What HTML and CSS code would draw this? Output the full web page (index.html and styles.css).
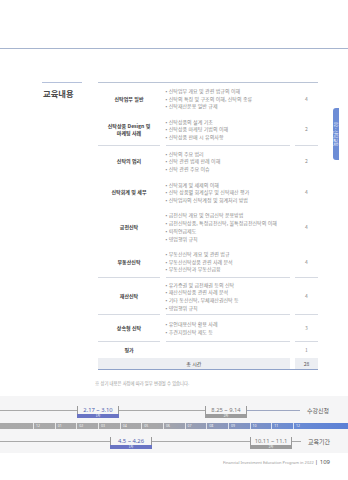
FILE: index.html
```html
<!DOCTYPE html>
<html lang="ko">
<head>
<meta charset="utf-8">
<title>교육내용</title>
<link rel="stylesheet" href="styles.css">
</head>
<body>
<div class="page">
  <div class="topline"></div>

  <div class="main">
    <div class="side-title"><h2>교육내용</h2></div>

    <div class="content">
      <div class="table">
        <div class="row">
          <div class="c-label">신탁업무 일반</div>
          <ul class="c-items">
            <li>신탁업무 개요 및 관련 법규의 이해</li>
            <li>신탁의 특징 및 구조의 이해, 신탁의 종류</li>
            <li>신탁재산운용 일반 규제</li>
          </ul>
          <div class="c-hour">4</div>
        </div>
        <div class="row sep">
          <div class="c-label">신탁상품 Design 및<br>마케팅 사례</div>
          <ul class="c-items">
            <li>신탁상품의 설계 기초</li>
            <li>신탁상품 마케팅 기법의 이해</li>
            <li>신탁상품 판매 시 유의사항</li>
          </ul>
          <div class="c-hour">2</div>
        </div>
        <div class="row">
          <div class="c-label">신탁의 법리</div>
          <ul class="c-items">
            <li>신탁의 주요 법리</li>
            <li>신탁 관련 법제 판례 이해</li>
            <li>신탁 관련 주요 이슈</li>
          </ul>
          <div class="c-hour">2</div>
        </div>
        <div class="row">
          <div class="c-label">신탁회계 및 세무</div>
          <ul class="c-items">
            <li>신탁회계 및 세제의 이해</li>
            <li>신탁 상품별 회계실무 및 신탁재산 평가</li>
            <li>신탁업자의 신탁계정 및 회계처리 방법</li>
          </ul>
          <div class="c-hour">4</div>
        </div>
        <div class="row">
          <div class="c-label">금전신탁</div>
          <ul class="c-items">
            <li>금전신탁 개요 및 연금신탁 운용방법</li>
            <li>금전신탁상품, 특정금전신탁, 불특정금전신탁의 이해</li>
            <li>퇴직연금제도</li>
            <li>영업행위 규칙</li>
          </ul>
          <div class="c-hour">4</div>
        </div>
        <div class="row sep">
          <div class="c-label">부동산신탁</div>
          <ul class="c-items">
            <li>부동산신탁 개요 및 관련 법규</li>
            <li>부동산신탁상품 관련 사례 분석</li>
            <li>부동산신탁과 부동산금융</li>
          </ul>
          <div class="c-hour">4</div>
        </div>
        <div class="row sep tight">
          <div class="c-label">재산신탁</div>
          <ul class="c-items">
            <li>유가증권 및 금전채권 등의 신탁</li>
            <li>재산신탁상품 관련 사례 분석</li>
            <li>기타 동산신탁, 무체재산권신탁 등</li>
            <li>영업행위 규칙</li>
          </ul>
          <div class="c-hour">4</div>
        </div>
        <div class="row sep loose">
          <div class="c-label">상속형 신탁</div>
          <ul class="c-items">
            <li>유언대용신탁 활용 사례</li>
            <li>후견지원신탁 제도 등</li>
          </ul>
          <div class="c-hour">3</div>
        </div>
        <div class="row">
          <div class="c-label">평가</div>
          <div class="c-items single"></div>
          <div class="c-hour">1</div>
        </div>
        <div class="row total">
          <div class="t-label">총 시간</div>
          <div class="t-hour">28</div>
        </div>
      </div>
      <p class="note">※ 상기 내용은 사정에 따라 일부 변경될 수 있습니다.</p>
    </div>

    <div class="tab-col"><div class="tab">02 · 신탁교육</div></div>
  </div>

  <div class="timeline">
    <div class="track">
      <div class="seg w77"></div>
      <div class="pbox first">
        <div class="pbox-top">2.17 ~ 3.10</div>
        <div class="pbox-bar">1차</div>
      </div>
      <div class="seg w86"></div>
      <div class="pbox second">
        <div class="pbox-top">8.25 ~ 9.14</div>
        <div class="pbox-bar">2차</div>
      </div>
      <div class="seg w53 bluish"></div>
      <div class="track-label">수강신청</div>
    </div>

    <div class="months">
      <div class="mlead"></div>
      <div class="m">12</div>
      <div class="m">01</div>
      <div class="m">02</div>
      <div class="m">03</div>
      <div class="m">04</div>
      <div class="m">05</div>
      <div class="m">06</div>
      <div class="m">07</div>
      <div class="m">08</div>
      <div class="m">09</div>
      <div class="m">10</div>
      <div class="m">11</div>
      <div class="m last">12</div>
    </div>

    <div class="track lower">
      <div class="seg w110"></div>
      <div class="pbox first">
        <div class="pbox-top">4.5 ~ 4.26</div>
        <div class="pbox-bar">1차</div>
      </div>
      <div class="seg w98"></div>
      <div class="pbox second">
        <div class="pbox-top">10.11 ~ 11.1</div>
        <div class="pbox-bar">2차</div>
      </div>
      <div class="seg w9"></div>
      <div class="track-label">교육기간</div>
    </div>
  </div>

  <div class="footer">Financial Investment Education Program in 2022 <span class="pageno">| 109</span></div>
</div>
</body>
</html>
```

FILE: styles.css
```css
* { box-sizing: border-box; }

html, body {
  margin: 0;
  padding: 0;
  background: #ffffff;
}

body {
  font-family: "Noto Sans CJK KR", "Noto Sans", sans-serif;
  color: #444;
}

.page {
  width: 348px;
  height: 480px;
  overflow: hidden;
  padding-top: 48px;
}

.topline {
  height: 1px;
  background: #a7b5cf;
}

/* ---------- main block ---------- */
.main {
  display: flex;
  margin-top: 33px;
  padding-left: 42px;
}

.side-title {
  width: 40px;
  border-top: 1.5px solid #b5c1db;
  align-self: flex-start;
}

.side-title h2 {
  margin: 0;
  padding: 5px 0 0 1px;
  font-size: 8.3px;
  line-height: 10px;
  font-weight: 700;
  color: #4a4a4a;
}

.content {
  width: 220px;
  margin-left: 16px;
}

.table {
  border-top: 1px solid #bac4d6;
  border-bottom: 1.2px solid #8fa2c9;
}

.row {
  display: grid;
  grid-template-columns: 62px 124px 23px;
  column-gap: 5.5px;
}

.c-label {
  display: flex;
  align-items: center;
  justify-content: center;
  text-align: center;
  font-size: 5px;
  line-height: 7.7px;
  font-weight: 700;
  color: #3c3c3c;
}

.c-items {
  margin: 0;
  padding: 3.9px 0;
  list-style: none;
  font-size: 5px;
  line-height: 7.7px;
  color: #8a8a8a;
  white-space: nowrap;
}

.c-items.single { min-height: 15.5px; }

.c-items li::before {
  content: "•";
  margin-right: 1.5px;
}

.c-hour {
  display: flex;
  align-items: center;
  justify-content: center;
  font-size: 5px;
  line-height: 7.7px;
  color: #8a8a8a;
}

.row.sep > * {
  border-bottom: 1px solid #d6dae2;
}

.row.tight .c-items { padding: 2.7px 0; }
.row.loose .c-items { padding: 5.2px 0; }

.row.total {
  height: 11px;
}

.t-label {
  grid-column: 1 / 3;
  background: #eceef2;
  display: flex;
  align-items: center;
  justify-content: center;
  font-size: 5px;
  color: #444;
}

.t-hour {
  background: #eceef2;
  display: flex;
  align-items: center;
  justify-content: center;
  font-size: 5px;
  color: #555;
}

.note {
  margin: 10px 0 0 -3px;
  font-size: 4.3px;
  line-height: 7px;
  color: #9a9a9a;
}

/* ---------- right tab ---------- */
.tab-col {
  width: 15px;
  margin-left: 15px;
}

.tab {
  margin-top: 26px;
  height: 52px;
  background: #6d8dd6;
  border-radius: 3px 0 0 3px;
  color: #ffffff;
  font-size: 4.3px;
  writing-mode: vertical-rl;
  text-orientation: sideways;
  display: flex;
  align-items: center;
  justify-content: center;
}

/* ---------- timeline ---------- */
.timeline {
  margin-top: 9.5px;
  background: #f5f5f6;
  padding: 10px 0 4px;
}

.track {
  display: flex;
  align-items: flex-start;
  height: 12px;
}

.track.lower {
  margin-top: 8px;
}

.seg {
  height: 1px;
  margin-top: 4px;
  background: #a9a9a9;
  flex: none;
}

.seg.bluish { background: #9ea7c2; }
.w77 { width: 77px; }
.w86 { width: 86px; }
.w53 { width: 53px; }
.w110 { width: 110px; }
.w98 { width: 98px; }
.w9 { width: 9px; }

.pbox {
  width: 42px;
  flex: none;
  display: flex;
  flex-direction: column;
}

.pbox-top {
  height: 8px;
  border-left: 1px solid #9a9a9a;
  border-right: 1px solid #9a9a9a;
  font-size: 5.8px;
  line-height: 8px;
  text-align: center;
  white-space: nowrap;
  font-family: "Noto Sans", "Noto Sans CJK KR", sans-serif;
}

.pbox-bar {
  height: 4px;
  font-size: 3px;
  line-height: 4px;
  text-align: center;
  color: #ffffff;
}

.pbox.first .pbox-top { color: #4e5eae; }
.pbox.first .pbox-bar { background: #6a74c4; }
.pbox.second .pbox-top { color: #7a7a7a; }
.pbox.second .pbox-bar { background: #9c9c9c; }

.track-label {
  margin-left: 7px;
  font-size: 6px;
  line-height: 9px;
  color: #555;
  white-space: nowrap;
}

.months {
  display: flex;
  height: 6px;
  margin-top: 5px;
  background: linear-gradient(to right, #a9a9a9 0%, #a7a7a9 45%, #8a97bd 65%, #6a8bd4 85%, #5b80d6 100%);
}

.mlead { width: 33px; flex: none; }

.m {
  width: 21.67px;
  flex: none;
  border-left: 1px solid rgba(255, 255, 255, 0.75);
  padding-left: 2px;
  font-size: 3.5px;
  line-height: 6px;
  color: rgba(255, 255, 255, 0.95);
  font-family: "Noto Sans", sans-serif;
}

.m.last { flex: 1; }

/* ---------- footer ---------- */
.footer {
  margin-top: 5px;
  padding-right: 18px;
  text-align: right;
  font-size: 4px;
  line-height: 8px;
  color: #9a9a9a;
  font-family: "Noto Sans", sans-serif;
}

.pageno {
  font-size: 6px;
  color: #555;
}
```
